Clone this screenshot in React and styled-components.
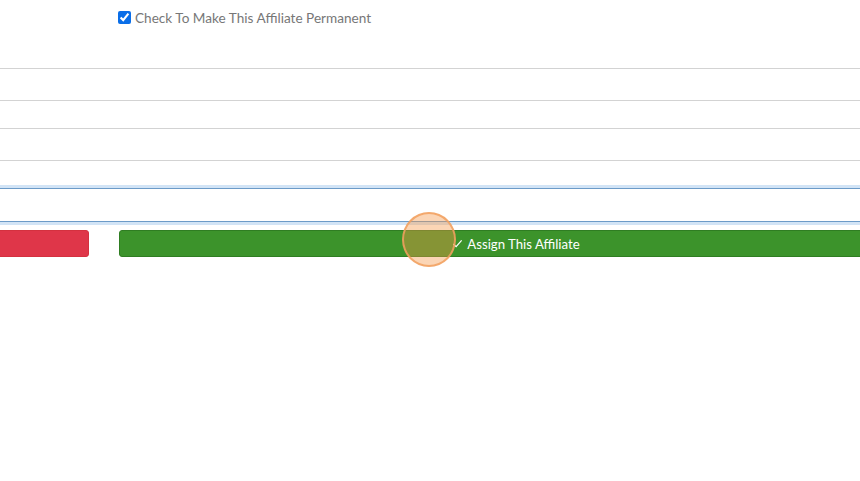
import styled, { createGlobalStyle } from 'styled-components';

const GlobalStyle = createGlobalStyle`
  html, body {
    margin: 0;
    padding: 0;
    background: #fff;
    overflow: hidden;
  }
  body {
    font-family: "Lato", "Noto Sans", sans-serif;
    width: 860px;
    height: 481px;
  }
`;

const Page = styled.div`
  position: relative;
  width: 860px;
  height: 481px;
  overflow: hidden;
  padding-top: 9px;
  box-sizing: border-box;
`;

const CheckRow = styled.label`
  display: flex;
  align-items: center;
  gap: 4px;
  padding-left: 118px;
  height: 17px;
  font-size: 13.6px;
  color: #777;
  input {
    width: 13px;
    height: 13px;
    margin: 0;
    accent-color: #0a6ee8;
  }
`;

const Rows = styled.div`
  margin-top: 42px;
  display: flex;
  flex-direction: column;
`;

const Row = styled.div`
  height: ${p => p.$h}px;
  border-top: 1px solid #d3d3d3;
  box-sizing: border-box;
  &:last-child {
    border-bottom: 1px solid #d3d3d3;
  }
`;

const FocusInput = styled.input`
  display: block;
  margin-top: 27px;
  width: 100%;
  height: 34px;
  box-sizing: border-box;
  border: 0;
  border-top: 1px solid #6c9bc8;
  border-bottom: 1px solid #6c9bc8;
  box-shadow: 0 0 0 3px #d2e4f6;
  outline: none;
  background: #fff;
`;

const Actions = styled.div`
  display: grid;
  grid-template-columns: 142px 1fr;
  gap: 30px;
  margin: 8px -53px 0;
`;

const Button = styled.button`
  height: 27px;
  border-radius: 3px;
  border: 1px solid ${p => p.$border};
  background: ${p => p.$bg};
  color: #fff;
  font-family: "Lato", "Noto Sans", sans-serif;
  font-size: 13.2px;
  display: flex;
  align-items: center;
  justify-content: center;
  gap: 4px;
  padding: 0;
`;

const ClickMark = styled.div`
  position: absolute;
  left: 402px;
  top: 212px;
  width: 54px;
  height: 55px;
  border-radius: 50%;
  box-sizing: border-box;
  background: rgba(246, 150, 70, 0.4);
  border: 2px solid rgba(242, 160, 95, 0.85);
  pointer-events: none;
`;

export default function App() {
  return (
    <>
      <GlobalStyle />
      <Page>
        <CheckRow>
          <input type="checkbox" defaultChecked />
          Check To Make This Affiliate Permanent
        </CheckRow>
        <Rows>
          <Row $h={32} />
          <Row $h={28} />
          <Row $h={33} />
        </Rows>
        <FocusInput />
        <Actions>
          <Button $bg="#df3649" $border="#d4313f" />
          <Button $bg="#3c932b" $border="#2f7d22">
            <svg width="11" height="11" viewBox="0 0 12 12" fill="none" stroke="#fff" strokeWidth="1.3">
              <path d="M1.5 6.5 L4.5 9.5 L10.5 2.5" />
            </svg>
            Assign This Affiliate
          </Button>
        </Actions>
        <ClickMark />
      </Page>
    </>
  );
}
